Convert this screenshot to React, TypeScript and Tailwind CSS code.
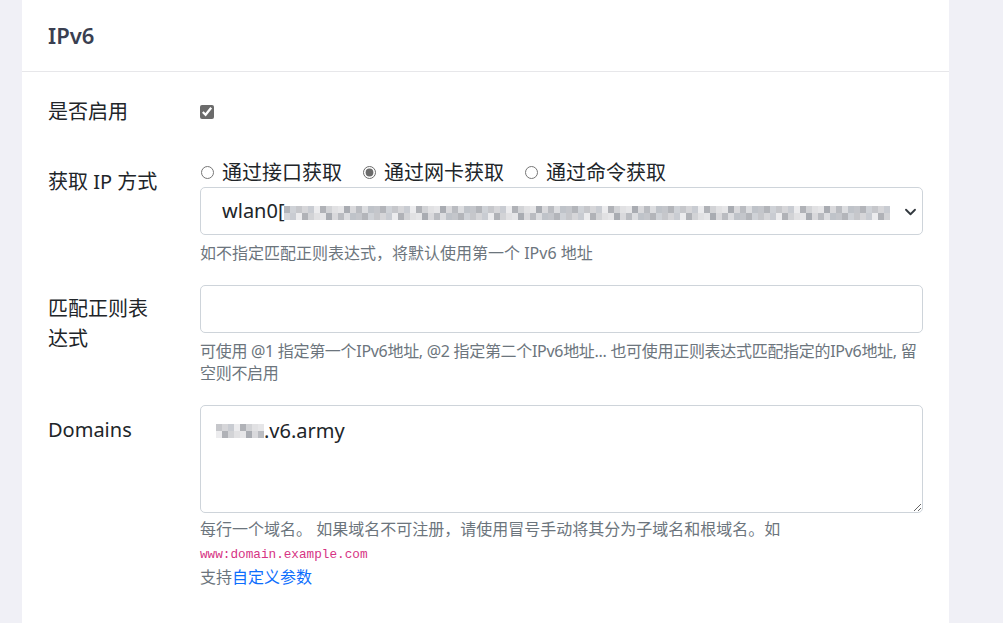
import React from 'react';

const blurShades = [
  '#d9d9dc', '#c6c7cb', '#e6e6e8', '#b3b5ba', '#d2d3d6', '#bfc3c9', '#ececee', '#babcc1',
  '#d6d6d9', '#a9acb2', '#cfd2d7', '#e1e1e3', '#c4c6cb', '#b0b2b7', '#dcdde0', '#c9ccd2',
];

const BlurText: React.FC<{ count: number; seed?: number }> = ({ count, seed = 0 }) => (
  <span className="inline-flex shrink-0 flex-col align-middle">
    {[0, 1].map((row) => (
      <span key={row} className="flex">
        {Array.from({ length: count }).map((_, i) => (
          <span
            key={i}
            className="h-[7px] w-[6px] shrink-0"
            style={{ backgroundColor: blurShades[(i * 7 + row * 5 + seed) % blurShades.length] }}
          />
        ))}
      </span>
    ))}
  </span>
);

const Label: React.FC<{ children: React.ReactNode; pad?: string }> = ({ children, pad = '' }) => (
  <div className={`w-[152px] shrink-0 ${pad}`}>
    <label className="block w-[116px] text-[20px] leading-[30px] text-[#212529]">{children}</label>
  </div>
);

const Help: React.FC<{ children: React.ReactNode; mt?: string }> = ({ children, mt = 'mt-[7px]' }) => (
  <div className={`${mt} text-[16px] leading-[22px] text-[#6c757d]`}>{children}</div>
);

export default function App() {
  return (
    <div
      className="min-h-[623px] bg-[#f0f0f6] pl-[22px] pr-[54px]"
      style={{ fontFamily: '"Noto Sans", "Noto Sans CJK SC", sans-serif' }}
    >
      <div className="bg-white">
        <div className="flex h-[72px] items-center border-b border-[#e7e7ea] px-[26px]">
          <h2 className="text-[22px] font-semibold text-[#3a3f51]">IPv6</h2>
        </div>

        <div className="flex flex-col px-[26px] pt-[25px] pb-[40px]">
          {/* 是否启用 */}
          <div className="flex">
            <Label>是否启用</Label>
            <div className="flex h-[30px] items-center">
              <input type="checkbox" defaultChecked className="m-0 h-[14px] w-[14px] accent-[#6b6b6b]" />
            </div>
          </div>

          {/* 获取 IP 方式 */}
          <div className="mt-[31px] flex">
            <Label pad="pt-[9px] whitespace-nowrap">获取 IP 方式</Label>
            <div className="min-w-0 flex-1">
              <div className="flex h-[29px] items-center gap-[21px] text-[20px] text-[#212529]">
                <label className="flex items-center gap-[8px]">
                  <input type="radio" name="way" className="m-0 ml-[1px] h-[13px] w-[13px] accent-[#6b6b6b]" />
                  通过接口获取
                </label>
                <label className="flex items-center gap-[8px]">
                  <input type="radio" name="way" defaultChecked className="m-0 h-[13px] w-[13px] accent-[#6b6b6b]" />
                  通过网卡获取
                </label>
                <label className="flex items-center gap-[8px]">
                  <input type="radio" name="way" className="m-0 h-[13px] w-[13px] accent-[#6b6b6b]" />
                  通过命令获取
                </label>
              </div>
              <div className="relative h-[48px] w-full overflow-hidden rounded-[5px] border border-[#ced4da] bg-white">
                <div className="flex h-full min-w-0 items-center overflow-hidden pl-[21px] pr-[32px] text-[20px] text-[#212529]">
                  <span className="shrink-0">wlan0[</span>
                  <div className="min-w-0 flex-1 overflow-hidden">
                    <BlurText count={102} seed={3} />
                  </div>
                </div>
                <svg
                  className="absolute right-[5px] top-[18px]"
                  width="13"
                  height="12"
                  viewBox="0 0 16 16"
                  fill="none"
                  stroke="#343a40"
                  strokeWidth="2.5"
                  strokeLinecap="round"
                  strokeLinejoin="round"
                >
                  <path d="M2 5l6 6 6-6" />
                </svg>
              </div>
              <Help>如不指定匹配正则表达式，将默认使用第一个 IPv6 地址</Help>
            </div>
          </div>

          {/* 匹配正则表达式 */}
          <div className="mt-[21px] flex">
            <Label pad="pt-[9px]">匹配正则表达式</Label>
            <div className="min-w-0 flex-1">
              <input
                type="text"
                className="block h-[48px] w-full rounded-[5px] border border-[#ced4da] px-[21px] text-[20px] outline-none"
              />
              <div className="mt-[7px] text-[16px] leading-[22px] tracking-[-0.3px] text-[#6c757d]">
                可使用 @1 指定第一个IPv6地址, @2 指定第二个IPv6地址... 也可使用正则表达式匹配指定的IPv6地址, 留空则不启用
              </div>
            </div>
          </div>

          {/* Domains */}
          <div className="mt-[21px] flex">
            <Label pad="pt-[10px]">Domains</Label>
            <div className="min-w-0 flex-1">
              <div className="relative">
                <textarea className="block h-[108px] w-full resize-y rounded-[5px] border border-[#ced4da] px-[15px] py-[10px] text-[20px] text-[#212529] outline-none" />
                <div className="absolute left-[16px] top-[11px] flex items-center text-[20px] leading-[30px] text-[#212529]">
                  <BlurText count={8} seed={1} />
                  <span>.v6.army</span>
                </div>
              </div>
              <Help mt="mt-[5px]">每行一个域名。 如果域名不可注册，请使用冒号手动将其分为子域名和根域名。如</Help>
              <div
                className="mt-[4px] text-[12.7px] leading-[22px] text-[#d63384]"
                style={{ fontFamily: '"Liberation Mono", monospace' }}
              >
                www:domain.example.com
              </div>
              <div className="text-[16px] leading-[22px] text-[#6c757d]">
                支持<a className="text-[#0d6efd]">自定义参数</a>
              </div>
            </div>
          </div>
        </div>
      </div>
    </div>
  );
}
